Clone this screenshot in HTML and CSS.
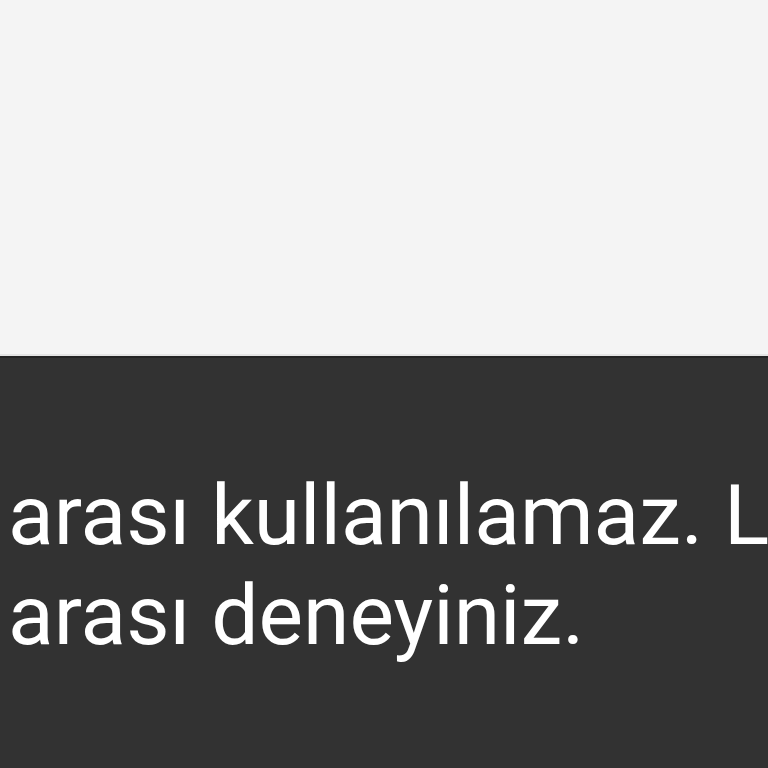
FILE: index.html
```html
<!DOCTYPE html>
<html>
<head>
<meta charset="utf-8">
<link rel="stylesheet" href="styles.css">
</head>
<body>
<div class="screen">
  <div class="content"></div>
  <div class="snackbar">
    <div class="message">
      <p class="line">arası kullanılamaz. Lütfen</p>
      <p class="line">arası deneyiniz.</p>
    </div>
  </div>
</div>
</body>
</html>
```

FILE: styles.css
```css
html, body {
  margin: 0;
  padding: 0;
  width: 768px;
  height: 768px;
  overflow: hidden;
}
.screen {
  display: flex;
  flex-direction: column;
  width: 768px;
  height: 768px;
}
.content {
  height: 354px;
  background: #f4f4f4;
  border-bottom: 2px solid #e4e4e4;
  flex-shrink: 0;
}
.snackbar {
  flex: 1;
  background: #323232;
  border-top: 2px solid #242424;
  padding: 108px 0 0 8px;
  overflow: hidden;
}
.message {
  font-family: Roboto, "Noto Sans", sans-serif;
  font-size: 84px;
  line-height: 100px;
  color: #ffffff;
  white-space: nowrap;
}
.line {
  margin: 0;
}
```
